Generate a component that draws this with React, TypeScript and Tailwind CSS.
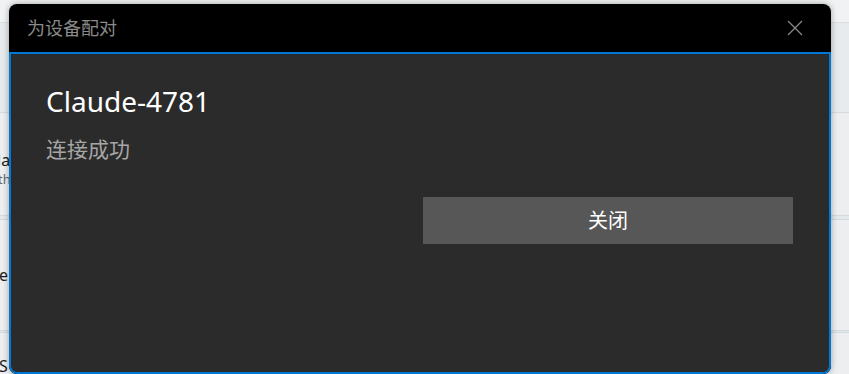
import React from 'react';

const font = { fontFamily: '"Noto Sans", "Noto Sans CJK SC", sans-serif' };

const Backdrop: React.FC = () => (
  <div className="flex flex-col h-[374px] bg-[#eef0f1] text-[#1b1b1b]">
    <div className="h-[23px] bg-[#f1f2f3] border-b border-[#d9dfe1]" />
    <div className="h-[90px] bg-[#e7ebed] border-b border-[#d4dadd]" />
    <div className="h-[102px] bg-[#eceeef] flex flex-col pt-[37px] pl-0">
      <span className="text-[16px] leading-[20px] -ml-[3px]">la</span>
      <span className="text-[13px] leading-[18px] text-[#666] -ml-[2px]">th</span>
    </div>
    <div className="h-[5px] bg-[#e3e8ea] border-y border-[#d3dadd]" />
    <div className="h-[110px] bg-[#eceeef] flex items-center">
      <span className="text-[16px] leading-[20px] -ml-[1px]">e</span>
    </div>
    <div className="h-[3px] bg-[#e3e8ea] border-y border-[#d3dadd]" />
    <div className="flex-1 bg-[#eceeef] flex items-end">
      <span className="text-[16px] leading-[16px] -ml-[1px]">S</span>
    </div>
  </div>
);

const PairDialog: React.FC = () => (
  <div className="absolute left-[9px] top-[4px] w-[822px] h-[370px] rounded-[8px] overflow-hidden bg-black flex flex-col shadow-[0_0_6px_rgba(0,0,0,0.35)]">
    <div className="h-[48px] flex items-center justify-between pl-[18px] pr-[28px]">
      <span className="text-[18px] text-[#8a8a8a] leading-none">为设备配对</span>
      <svg width="16" height="16" viewBox="0 0 16 16" className="text-[#8c8c8c]">
        <path d="M1 1L15 15M15 1L1 15" stroke="currentColor" strokeWidth="1.2" fill="none" />
      </svg>
    </div>
    <div className="flex-1 bg-[#2b2b2b] border-2 border-[#0078d4] rounded-b-[8px] pl-[35px] pr-[36px] pt-[29px] flex flex-col">
      <div className="text-[28px] leading-[36px] text-white">Claude-4781</div>
      <div className="mt-[17px] text-[21px] leading-[26px] text-[#a6a6a6]">连接成功</div>
      <div className="flex justify-end mt-[35px]">
        <button className="w-[370px] h-[47px] bg-[#575757] text-white text-[20px]">关闭</button>
      </div>
    </div>
  </div>
);

export default function App() {
  return (
    <div className="relative w-[849px] h-[374px] overflow-hidden" style={font}>
      <Backdrop />
      <PairDialog />
    </div>
  );
}
